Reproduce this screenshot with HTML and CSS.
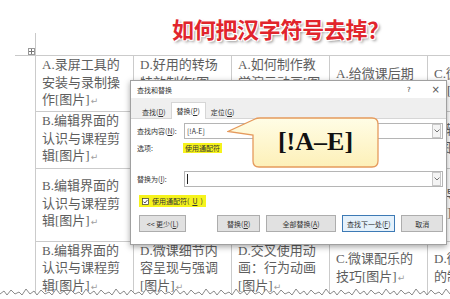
FILE: index.html
```html
<!DOCTYPE html>
<html>
<head>
    <title>如何把汉字符号去掉</title>
    <link rel="stylesheet" href="styles.css">
</head>
<body>
    <div class="page">
        <h1 class="title">如何把汉字符号去掉？</h1>

        <div class="sheet">
            <span class="move-handle"></span>
            <table class="grid">
                <tr class="r1">
                    <td>A.录屏工具的安装与录制操作[图片]<span class="mark">↵</span></td>
                    <td>D.好用的转场特效制作[图片]<span class="mark">↵</span></td>
                    <td>A.如何制作教学演示动画[图片]<span class="mark">↵</span></td>
                    <td>A.给微课后期配音[图片]<span class="mark">↵</span></td>
                    <td>C.微课字幕添加[图片]<span class="mark">↵</span></td>
                </tr>
                <tr class="r2">
                    <td>B.编辑界面的认识与课程剪辑[图片]<span class="mark">↵</span></td>
                    <td>D.片头片尾的制作[图片]<span class="mark">↵</span></td>
                    <td>B.字幕的添加与美化[图片]<span class="mark">↵</span></td>
                    <td>A.声音降噪处理[图片]<span class="mark">↵</span></td>
                    <td>B.输出与发布[图片]<span class="mark">↵</span></td>
                </tr>
                <tr class="r3">
                    <td>B.编辑界面的认识与课程剪辑[图片]<span class="mark">↵</span></td>
                    <td>C.画中画效果[图片]<span class="mark">↵</span></td>
                    <td>A.缩放与平移[图片]<span class="mark">↵</span></td>
                    <td>B.旁白录制[图片]<span class="mark">↵</span></td>
                    <td>C.导出设置[图片]<span class="mark">↵</span></td>
                </tr>
                <tr class="r4">
                    <td>B.编辑界面的认识与课程剪辑[图片]<span class="mark">↵</span></td>
                    <td>D.微课细节内容呈现与强调[图片]<span class="mark">↵</span></td>
                    <td>D.交叉使用动画：行为动画[图片]<span class="mark">↵</span></td>
                    <td>C.微课配乐的技巧[图片]<span class="mark">↵</span></td>
                    <td>D.微课片头尾的制作[图片]<span class="mark">↵</span></td>
                </tr>
            </table>
        </div>

        <div class="dialog">
            <div class="dlg-title">
                <span>查找和替换</span>
                <span class="dlg-help">?</span>
                <span class="dlg-close">×</span>
            </div>
            <div class="tabs">
                <span class="tab">查找(<u>D</u>)</span>
                <span class="tab active">替换(<u>P</u>)</span>
                <span class="tab">定位(<u>G</u>)</span>
            </div>
            <div class="tab-page">
                <div class="field">
                    <label>查找内容(<u>N</u>):</label>
                    <div class="input">
                        <span>[!A-E]</span>
                        <span class="drop"><svg width="6" height="4" viewBox="0 0 6 4"><path d="M0.5 0.5 L3 3 L5.5 0.5" fill="none" stroke="#555" stroke-width="0.8"/></svg></span>
                    </div>
                </div>
                <div class="options">
                    <label>选项:</label>
                    <span class="hl">使用通配符</span>
                </div>
                <div class="field replace">
                    <label>替换为(<u>I</u>):</label>
                    <div class="input">
                        <span class="caret"></span>
                        <span class="drop"><svg width="6" height="4" viewBox="0 0 6 4"><path d="M0.5 0.5 L3 3 L5.5 0.5" fill="none" stroke="#555" stroke-width="0.8"/></svg></span>
                    </div>
                </div>
                <div class="check">
                    <span class="hl check-hl">
                        <svg width="7" height="7" viewBox="0 0 7 7"><rect x="0.5" y="0.5" width="6" height="6" fill="#fff" stroke="#333" stroke-width="0.7"/><path d="M1.5 3.6 L2.9 5 L5.5 2" fill="none" stroke="#222" stroke-width="0.8"/></svg>
                        使用通配符(<u>U</u>)
                    </span>
                </div>
                <div class="buttons">
                    <span class="btn btn-more">&lt;&lt; 更少(<u>L</u>)</span>
                    <span class="btn btn-replace">替换(<u>R</u>)</span>
                    <span class="btn btn-all">全部替换(<u>A</u>)</span>
                    <span class="btn btn-next">查找下一处(<u>F</u>)</span>
                    <span class="btn btn-cancel">取消</span>
                </div>
            </div>
        </div>

        <div class="callout">
            <svg class="callout-shape" width="153" height="52" viewBox="0 0 153 52">
                <defs>
                    <linearGradient id="calloutFill" x1="0" y1="0" x2="0" y2="1">
                        <stop offset="0" stop-color="#fffde6"/>
                        <stop offset="1" stop-color="#fdf0b8"/>
                    </linearGradient>
                </defs>
                <path d="M33 1 H145 Q151 1 151 7 V44 Q151 50 145 50 H32 Q26 50 26 44 V18 L1 14.5 L28 2 Q29.5 1 33 1 Z" fill="url(#calloutFill)" stroke="#e59a5c" stroke-width="1.3"/>
            </svg>
            <span class="callout-text">[!A–E]</span>
        </div>

        <svg class="torn" width="450" height="13" viewBox="0 0 450 13">
            <path d="M-2 8 l2 0 l4,-3 l3,4 l4,-5 l4,4 l4,-2 l3,3 l4,-6 l4,5 l4,-3 l3,4 l4,-5 l4,4 l4,-2 l3,3 l4,-6 l4,5 l4,-3 l3,4 l4,-5 l4,4 l4,-2 l3,3 l4,-6 l4,5 l4,-3 l3,4 l4,-5 l4,4 l4,-2 l3,3 l4,-6 l4,5 l4,-3 l3,4 l4,-5 l4,4 l4,-2 l3,3 l4,-6 l4,5 l4,-3 l3,4 l4,-5 l4,4 l4,-2 l3,3 l4,-6 l4,5 l4,-3 l3,4 l4,-5 l4,4 l4,-2 l3,3 l4,-6 l4,5 l4,-3 l3,4 l4,-5 l4,4 l4,-2 l3,3 l4,-6 l4,5 l4,-3 l3,4 l4,-5 l4,4 l4,-2 l3,3 l4,-6 l4,5 l4,-3 l3,4 l4,-5 l4,4 l4,-2 l3,3 l4,-6 l4,5 l4,-3 l3,4 l4,-5 l4,4 l4,-2 l3,3 l4,-6 l4,5 l4,-3 l3,4 l4,-5 l4,4 l4,-2 l3,3 l4,-6 l4,5 l4,-3 l3,4 l4,-5 l4,4 l4,-2 l3,3 l4,-6 l4,5 l4,-3 l3,4 l4,-5 l4,4 l4,-2 l3,3 l4,-6 l4,5 l4,-3 l3,4 l4,-5 l4,4 l4,-2 l3,3 l4,-6 l4,5 L453 8 L453 15 L-2 15 Z" fill="#fff" stroke="#7d7d7d" stroke-width="0.9"/>
        </svg>
    </div>
</body>
</html>
```

FILE: styles.css
```css
body {
    margin: 0;
    background-color: #fff;
    font-family: "Liberation Serif", "Noto Sans CJK SC", serif;
}
.page {
    position: relative;
    width: 450px;
    height: 299px;
    overflow: hidden;
}
.title {
    margin: 0;
    height: 39px;
    padding: 16px 0 0 172px;
    font-family: "Noto Sans CJK SC", sans-serif;
    font-size: 22px;
    line-height: 24px;
    font-weight: 700;
    letter-spacing: -0.3px;
    color: #e1252c;
    text-shadow: -1px -1px 0 #fff, 1px -1px 0 #fff, -1px 1px 0 #fff, 1px 1px 0 #fff, 2px 2px 3px rgba(0,0,0,0.45);
}

/* document table */
.sheet {
    position: relative;
    margin-left: 35px;
}
.sheet::before {
    content: "";
    position: absolute;
    left: -20px;
    top: 0;
    width: 20px;
    border-top: 1px solid #c9c9c9;
}
.sheet::after {
    content: "";
    position: absolute;
    left: 0;
    top: -22px;
    height: 22px;
    border-left: 1px solid #c9c9c9;
}
.move-handle {
    position: absolute;
    left: -7px;
    top: -7px;
    width: 5px;
    height: 5px;
    border: 1px solid #9a9a9a;
    background:
        linear-gradient(#777, #777) center / 1px 100% no-repeat,
        linear-gradient(#777, #777) center / 100% 1px no-repeat,
        #fff;
}
.grid {
    border-collapse: collapse;
    table-layout: fixed;
    width: 491px;
}
.grid td {
    border: 1px solid #cbcbcb;
    padding: 0 4px 0 6px;
    vertical-align: middle;
    font-size: 13px;
    line-height: 17.5px;
    color: #5e5e5e;
    overflow: hidden;
}
.r1 td { height: 54px; }
.r2 td { height: 56px; }
.r3 td { height: 72px; }
.r4 td { height: 54px; }
.mark {
    margin-left: 1px;
    font-family: "DejaVu Sans", sans-serif;
    font-size: 9px;
    color: #a0a0a0;
}

/* find & replace dialog */
.dialog {
    position: absolute;
    left: 130px;
    top: 80px;
    width: 315px;
    height: 163px;
    border: 1px solid #a0a0a0;
    background: #fff;
    box-shadow: 0 2px 6px rgba(0,0,0,0.35);
    font-family: "Noto Sans CJK SC", sans-serif;
    font-size: 7px;
    color: #333;
}
.dlg-title {
    display: flex;
    align-items: center;
    height: 17px;
    padding: 0 6px;
}
.dlg-help {
    margin-left: auto;
    margin-right: 21px;
    font-family: "DejaVu Sans", sans-serif;
    font-size: 7px;
}
.dlg-close {
    font-family: "DejaVu Sans", sans-serif;
    font-size: 10px;
    color: #555;
}
.tabs {
    display: flex;
    align-items: flex-end;
    height: 20px;
    padding-left: 6px;
    background: #efefef;
    border-bottom: 1px solid #d6d6d6;
}
.tab {
    height: 14px;
    line-height: 14px;
    padding: 0 4px;
    margin-bottom: -1px;
    border: 1px solid transparent;
    border-bottom: none;
}
.tab.active {
    height: 16px;
    line-height: 16px;
    padding: 0 5px;
    background: #fff;
    border-color: #d6d6d6;
}
.tab-page {
    padding: 4px 3px 0 6px;
}
.field {
    display: flex;
    align-items: center;
    height: 16px;
}
.field label {
    width: 47px;
}
.input {
    flex: 1;
    display: flex;
    align-items: center;
    height: 14px;
    padding-left: 2px;
    border: 1px solid #b5b5b5;
}
.drop {
    display: flex;
    align-items: center;
    justify-content: center;
    margin-left: auto;
    width: 7px;
    height: 12px;
    margin-right: 1px;
    border: 1px solid #c8c8c8;
    background: #f4f4f4;
}
.caret {
    width: 1px;
    height: 10px;
    background: #222;
}
.options {
    display: flex;
    align-items: center;
    height: 11px;
    margin-top: 3px;
}
.options label {
    width: 46px;
}
.hl {
    background: #f6f31c;
    padding: 0 2px;
}
.replace {
    margin-top: 18px;
}
.check {
    display: flex;
    margin-top: 8px;
    margin-left: 2px;
}
.check-hl {
    display: flex;
    align-items: center;
    gap: 3px;
    height: 12px;
    padding: 0 3px;
}
.buttons {
    display: flex;
    gap: 6px;
    margin-top: 8px;
    margin-left: 2px;
}
.btn {
    display: flex;
    align-items: center;
    justify-content: center;
    height: 15px;
    border: 1px solid #adadad;
    background: #e1e1e1;
}
.btn-more { width: 46px; margin-right: 25px; }
.btn-replace { width: 41px; }
.btn-all { width: 69px; }
.btn-next {
    width: 52px;
    border-color: #3d7ab5;
    background: #e5f1fb;
}
.btn-cancel { width: 40px; }

/* callout bubble */
.callout {
    position: absolute;
    left: 227px;
    top: 117px;
    width: 153px;
    height: 52px;
}
.callout-shape {
    position: absolute;
    left: 0;
    top: 0;
}
.callout-text {
    position: absolute;
    left: 26px;
    top: 0;
    width: 125px;
    height: 50px;
    line-height: 50px;
    text-align: center;
    font-family: "Liberation Serif", serif;
    font-size: 26px;
    font-weight: 700;
    color: #111;
}

.torn {
    position: absolute;
    left: 0;
    top: 286px;
}
```
